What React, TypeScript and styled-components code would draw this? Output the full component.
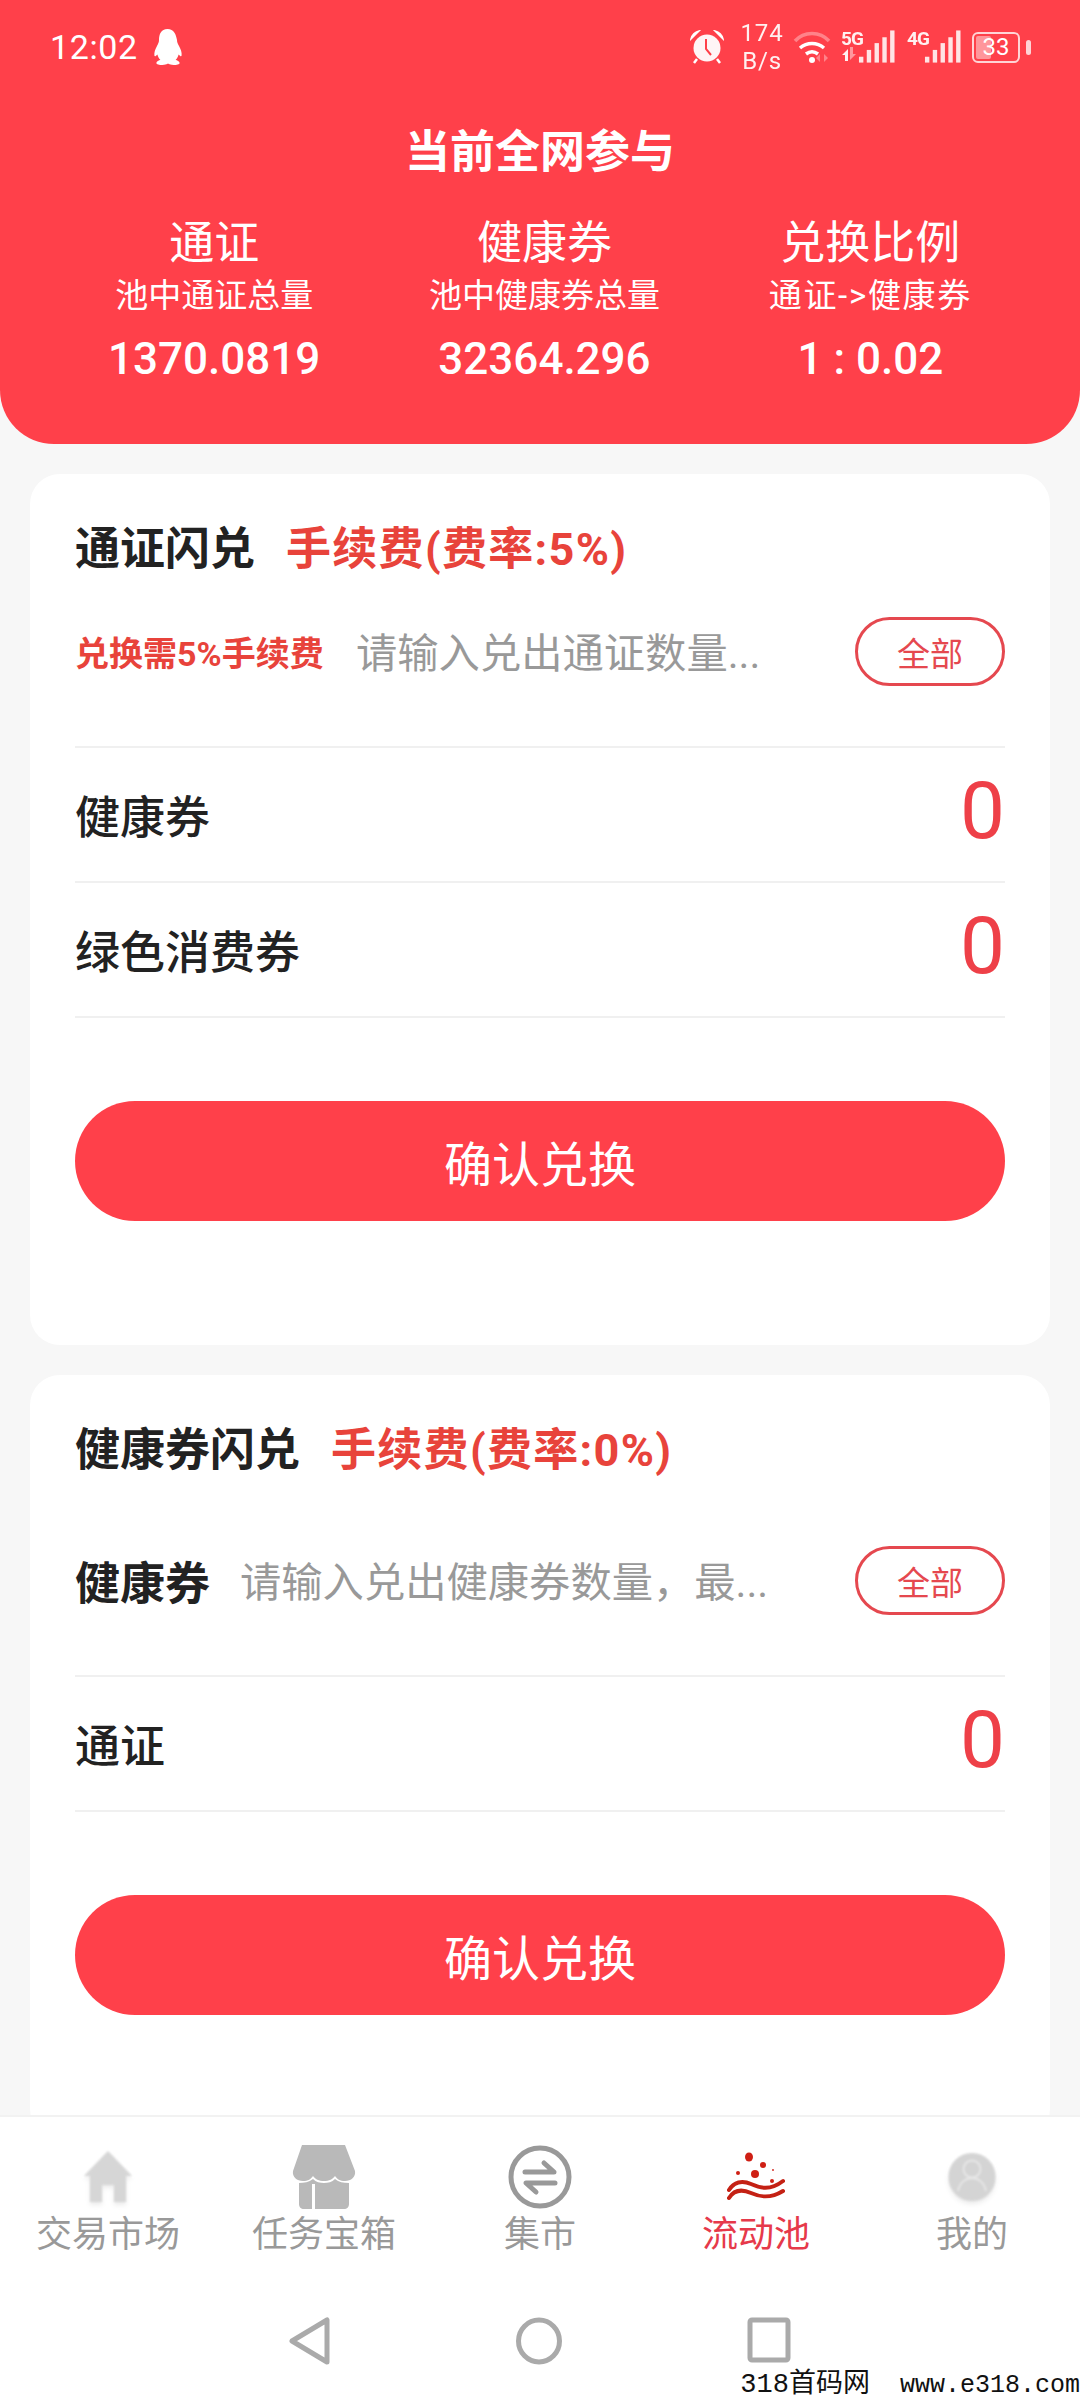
import styled, { createGlobalStyle } from "styled-components";

const RED = "#ff404a";
const FONT = `Roboto, "Noto Sans CJK SC", sans-serif`;

const GlobalStyle = createGlobalStyle`
  html, body {
    margin: 0;
    padding: 0;
    background: #f7f7f7;
  }
  #root {
    height: 2400px;
    overflow: hidden;
    position: relative;
  }
`;

const Page = styled.div`
  width: 1080px;
  font-family: ${FONT};
`;

const Header = styled.header`
  background: ${RED};
  height: 444px;
  border-radius: 0 0 54px 54px;
  color: #fff;
  text-align: center;
  margin-bottom: 30px;
`;

const StatusBar = styled.div`
  height: 94px;
  padding: 0 55px 0 50px;
  box-sizing: border-box;
  display: flex;
  align-items: center;
  color: #fff;
`;

const Clock = styled.span`
  font-size: 34px;
  letter-spacing: 0.6px;
  margin-right: 14px;
`;

const StatusRight = styled.div`
  margin-left: auto;
  display: flex;
  align-items: center;
`;

const Speed = styled.div`
  width: 40px;
  margin: 0 11px 0 18px;
  font-size: 24px;
  line-height: 28px;
  letter-spacing: 0.8px;
  text-align: center;
  white-space: nowrap;
  display: flex;
  flex-direction: column;
  align-items: center;
  opacity: 0.92;
`;

const NetTag = styled.div<{ $left: number }>`
  width: 17px;
  height: 34px;
  margin-left: ${(p) => p.$left}px;
  font-size: 19px;
  line-height: 17px;
  font-weight: 700;
  letter-spacing: -1px;
  white-space: nowrap;
  opacity: 0.92;
  position: relative;
  z-index: 1;
`;

const ArrowMark = styled.svg`
  display: block;
`;

const Battery = styled.div`
  width: 48px;
  height: 31px;
  margin: 0 5px 0 11px;
  box-sizing: border-box;
  border: 2.5px solid #ffd4d6;
  border-radius: 6px;
  padding: 2px;
  position: relative;
  display: flex;
  align-items: center;
  justify-content: center;
  font-size: 24px;
  line-height: 24px;
  color: #fff;
  &::before {
    content: "";
    position: absolute;
    left: 2px;
    top: 2px;
    bottom: 2px;
    width: 33%;
    background: rgba(255, 255, 255, 0.45);
    border-radius: 2px;
  }
  &::after {
    content: "";
    position: absolute;
    right: -13px;
    top: 6px;
    width: 5px;
    height: 15px;
    border-radius: 3px;
    background: #ffd4d6;
  }
`;

const BatteryValue = styled.span`
  position: relative;
`;

const HeadTitle = styled.h1`
  margin: 33px 0 0;
  font-size: 45px;
  line-height: 52px;
  font-weight: 700;
`;

const Stats = styled.div`
  display: flex;
  justify-content: space-between;
  padding: 0 108px;
  margin-top: 39px;
`;

const Stat = styled.div`
  display: flex;
  flex-direction: column;
  align-items: center;
`;

const StatName = styled.div`
  font-size: 45px;
  line-height: 52px;
`;

const StatSub = styled.div<{ $wide?: boolean }>`
  font-size: 33px;
  line-height: 44px;
  margin-top: 4px;
  white-space: nowrap;
  letter-spacing: ${(p) => (p.$wide ? "1.7px" : "0")};
`;

const StatValue = styled.div`
  font-size: 44px;
  line-height: 52px;
  font-weight: 500;
  margin-top: 15px;
  white-space: nowrap;
`;

const Card = styled.section`
  margin: 0 30px 30px;
  padding: 50px 45px 124px;
  background: #fff;
  border-radius: 30px;
`;

const CardTitle = styled.div`
  display: flex;
  align-items: center;
  font-size: 45px;
  line-height: 52px;
  font-weight: 700;
  color: #222;
`;

const Fee = styled.span`
  margin-left: 31px;
  color: #e8433b;
  font-weight: 700;
  letter-spacing: 1.3px;
`;

const InputRow = styled.div<{ $top: number }>`
  margin-top: ${(p) => p.$top}px;
  padding-bottom: 60px;
  display: flex;
  align-items: center;
  border-bottom: 2px solid #f0f0f0;
`;

const Hint = styled.span`
  width: 281px;
  flex: none;
  font-size: 34px;
  font-weight: 700;
  color: #e8433b;
  white-space: nowrap;
`;

const InputLabel = styled.span`
  width: 165px;
  flex: none;
  font-size: 45px;
  font-weight: 700;
  color: #222;
`;

const Placeholder = styled.span`
  flex: 1;
  padding-top: 6px;
  font-size: 41.3px;
  line-height: 63px;
  color: #999;
  white-space: nowrap;
`;

const AllButton = styled.button`
  width: 150px;
  height: 69px;
  flex: none;
  padding: 0;
  background: #fff;
  border: 3px solid #e5484f;
  border-radius: 35px;
  font-family: inherit;
  font-size: 33px;
  color: #e5484f;
`;

const ResultRow = styled.div`
  height: 133px;
  display: flex;
  align-items: center;
  justify-content: space-between;
  border-bottom: 2px solid #f0f0f0;
`;

const ResultLabel = styled.span`
  font-size: 45px;
  font-weight: 500;
  color: #222;
`;

const ResultValue = styled.span`
  font-size: 80px;
  line-height: 80px;
  margin-top: -7px;
  color: #ee4048;
`;

const Submit = styled.button`
  display: block;
  width: 100%;
  height: 120px;
  margin-top: 83px;
  background: ${RED};
  border: 0;
  border-radius: 60px;
  font-family: inherit;
  font-size: 48px;
  color: #fff;
`;

const BottomArea = styled.div`
  position: absolute;
  left: 0;
  right: 0;
  bottom: 0;
  height: 285px;
  background: #fff;
  border-top: 2px solid #f2f2f2;
  box-sizing: border-box;
  font-family: ${FONT};
`;

const TabBar = styled.nav`
  height: 150px;
  display: flex;
`;

const Tab = styled.div<{ $active?: boolean }>`
  flex: 1;
  display: flex;
  flex-direction: column;
  align-items: center;
  font-size: 36px;
  color: ${(p) => (p.$active ? "#e6394a" : "#999")};
`;

const TabIcon = styled.div`
  height: 70px;
  margin-top: 25px;
  display: flex;
  align-items: center;
  justify-content: center;
`;

const TabLabel = styled.span`
  line-height: 40px;
  margin-top: 3px;
`;

const SoftIcon = styled.svg`
  filter: blur(1px) drop-shadow(0 3px 2px rgba(0, 0, 0, 0.08));
`;

const SystemNav = styled.div`
  height: 130px;
  padding-top: 50px;
  box-sizing: border-box;
  display: flex;
  justify-content: center;
  gap: 185px;
`;

const Watermark = styled.div`
  position: absolute;
  right: 0;
  bottom: -1px;
  font-family: "Liberation Mono", "Noto Sans CJK SC", monospace;
  font-size: 25px;
  line-height: 30px;
  color: #111;
  white-space: pre;
`;

const WatermarkName = styled.span`
  font-size: 27px;
`;

const Penguin = () => (
  <svg width="31" height="36" viewBox="0 0 31 36" fill="#fff">
    <path d="M15.5 0C9 0 7 5.5 7 11c0 2-.6 3.5-2 6-1.8 3.2-3 6.6-2.6 9.4.2 1.4 1.2 1 3-1 .6 2.400 1.800 4.200 3 5.400-2.400.8-4 1.800-4 3.200 0 1.400 3 2 6 2 2.400 0 4-.6 5-1.200h1.200c1 .6 2.600 1.200 5 1.200 3 0 6-.6 6-2 0-1.400-1.600-2.400-4-3.200 1.200-1.200 2.400-3 3-5.400 1.800 2 2.800 2.400 3 1 .4-2.800-.8-6.200-2.600-9.400-1.400-2.500-2-4-2-6C24 5.500 22 0 15.500 0z" />
  </svg>
);

const AlarmIcon = () => (
  <svg width="34" height="34" viewBox="0 0 34 34">
    <circle cx="17" cy="18" r="13.500" fill="#fff" opacity="0.95" />
    <path d="M1 9c1-4 4-7 8-8zM33 9c-1-4-4-7-8-8z" fill="#fff" stroke="#fff" strokeWidth="1.500" />
    <path d="M7 29l-3 4M27 29l3 4" stroke="#fff" strokeWidth="2.500" />
    <path d="M16 9v10l5 6" stroke={RED} strokeWidth="2" fill="none" />
  </svg>
);

const WifiIcon = () => (
  <svg width="40" height="34" viewBox="0 0 40 34" fill="none" stroke="#fff" strokeWidth="3.500">
    <path d="M2 11C11 1 27 1 36 11" opacity="0.35" />
    <path d="M7 18c7-6 17-6 24 0" />
    <path d="M13 24c4-3 8-3 12 0" />
    <circle cx="19" cy="30" r="3" fill="#fff" stroke="none" />
    <path d="M27 32v-8l-4 4zM31 24v8l4-4z" fill="#fff" stroke="none" opacity="0.35" />
  </svg>
);

const NetArrows = () => (
  <ArrowMark width="16" height="14" viewBox="0 0 16 14" fill="#fff">
    <path d="M7 14V2L1 8H4V14z" />
    <path d="M9 0V13L15 7H12V0z" opacity="0.5" />
  </ArrowMark>
);

const Signal = () => (
  <svg width="37" height="34" viewBox="0 0 38 34" fill="#ffe4e5">
    <rect x="1" y="27" width="4.500" height="6" />
    <rect x="9" y="20" width="4.500" height="13" />
    <rect x="17" y="13" width="4.500" height="20" />
    <rect x="25" y="7" width="4.500" height="26" />
    <rect x="33" y="0" width="4.500" height="33" />
  </svg>
);

const HomeIcon = () => (
  <SoftIcon width="50" height="54" viewBox="0 0 50 54" fill="#d6d6d6">
    <path d="M25 1L49 26H43V52H31V35H19V52H7V26H1z" />
  </SoftIcon>
);

const StoreIcon = () => (
  <svg width="64" height="64" viewBox="0 0 64 64">
    <path d="M10 0H53L63 26c1 6-4 10-10 10-5 0-8-2-10-5-2 3-6 5-11 5s-9-2-11-5c-2 3-5 5-10 5C5 36 0 32 1 26z" fill="#b9b9b9" />
    <path d="M7 38c5 0 10-1 14-4 3 3 7 4 11 4s8-1 11-4c4 3 8 4 14 4v21c0 3-2 5-5 5H12c-3 0-5-2-5-5z" fill="#b9b9b9" />
    <rect x="20" y="39" width="3" height="25" fill="#fff" />
  </svg>
);

const SwapIcon = () => (
  <svg width="64" height="64" viewBox="0 0 64 64" fill="none" stroke="#999">
    <circle cx="32" cy="32" r="29" strokeWidth="5" />
    <path d="M17 27h29l-10-9" strokeWidth="5" strokeLinecap="round" strokeLinejoin="round" />
    <path d="M47 38H18l10 9" strokeWidth="5" strokeLinecap="round" strokeLinejoin="round" />
  </svg>
);

const PoolIcon = () => (
  <svg width="58" height="50" viewBox="0 0 58 50" fill="#cf1f14">
    <ellipse cx="22" cy="5" rx="4" ry="4.500" />
    <circle cx="36" cy="13" r="3" />
    <circle cx="11" cy="21" r="2" />
    <circle cx="28" cy="22" r="4" />
    <circle cx="46" cy="18" r="0.900" />
    <circle cx="45" cy="29" r="2" />
    <path d="M2 38C7 30 15 28 24 32s19 7 32-3" fill="none" stroke="#c42114" strokeWidth="4" strokeLinecap="round" />
    <path d="M2 46C7 38 15 37 24 41s19 6 32-2" fill="none" stroke="#c42114" strokeWidth="4" strokeLinecap="round" />
  </svg>
);

const MineIcon = () => (
  <SoftIcon width="48" height="50" viewBox="0 0 48 50">
    <ellipse cx="24" cy="25" rx="23.500" ry="24" fill="#d4d4d4" />
    <circle cx="24" cy="17" r="8.500" fill="none" stroke="#e8e8e8" strokeWidth="1.800" />
    <path d="M10 39c2-9 8-13 14-13s12 4 14 13" fill="none" stroke="#e8e8e8" strokeWidth="1.800" />
  </SoftIcon>
);

const BackIcon = () => (
  <svg width="42" height="48" viewBox="0 0 42 48" fill="none" stroke="#aaa" strokeWidth="5" strokeLinejoin="round">
    <path d="M38 3V45L3 24z" />
  </svg>
);

const HomeNavIcon = () => (
  <svg width="46" height="48" viewBox="0 0 46 48" fill="none" stroke="#aaa" strokeWidth="5">
    <ellipse cx="23" cy="24" rx="20.500" ry="21" />
  </svg>
);

const RecentIcon = () => (
  <svg width="44" height="46" viewBox="0 0 44 46" fill="none" stroke="#aaa" strokeWidth="5" strokeLinejoin="round">
    <rect x="3" y="3" width="38" height="40" rx="2" />
  </svg>
);

const tabs = [
  { label: "交易市场", icon: <HomeIcon /> },
  { label: "任务宝箱", icon: <StoreIcon /> },
  { label: "集市", icon: <SwapIcon /> },
  { label: "流动池", icon: <PoolIcon />, active: true },
  { label: "我的", icon: <MineIcon /> },
];

const stats = [
  { name: "通证", sub: "池中通证总量", value: "1370.0819" },
  { name: "健康券", sub: "池中健康券总量", value: "32364.296" },
  { name: "兑换比例", sub: "通证->健康券", value: "1 : 0.02", wide: true },
];

const Result = ({ label }: { label: string }) => (
  <ResultRow>
    <ResultLabel>{label}</ResultLabel>
    <ResultValue>0</ResultValue>
  </ResultRow>
);

const App = () => {
  return (
    <>
      <GlobalStyle />
      <Page>
        <Header>
          <StatusBar>
            <Clock>12:02</Clock>
            <Penguin />
            <StatusRight>
              <AlarmIcon />
              <Speed>
                <span>174</span>
                <span>B/s</span>
              </Speed>
              <WifiIcon />
              <NetTag $left={8}>
                5G
                <NetArrows />
              </NetTag>
              <Signal />
              <NetTag $left={12}>4G</NetTag>
              <Signal />
              <Battery>
                <BatteryValue>33</BatteryValue>
              </Battery>
            </StatusRight>
          </StatusBar>
          <HeadTitle>当前全网参与</HeadTitle>
          <Stats>
            {stats.map((s) => (
              <Stat key={s.name}>
                <StatName>{s.name}</StatName>
                <StatSub $wide={s.wide}>{s.sub}</StatSub>
                <StatValue>{s.value}</StatValue>
              </Stat>
            ))}
          </Stats>
        </Header>

        <Card>
          <CardTitle>
            通证闪兑
            <Fee>手续费(费率:5%)</Fee>
          </CardTitle>
          <InputRow $top={41}>
            <Hint>兑换需5%手续费</Hint>
            <Placeholder>请输入兑出通证数量...</Placeholder>
            <AllButton>全部</AllButton>
          </InputRow>
          <Result label="健康券" />
          <Result label="绿色消费券" />
          <Submit>确认兑换</Submit>
        </Card>

        <Card>
          <CardTitle>
            健康券闪兑
            <Fee>手续费(费率:0%)</Fee>
          </CardTitle>
          <InputRow $top={69}>
            <InputLabel>健康券</InputLabel>
            <Placeholder>请输入兑出健康券数量，最...</Placeholder>
            <AllButton>全部</AllButton>
          </InputRow>
          <Result label="通证" />
          <Submit>确认兑换</Submit>
        </Card>
      </Page>

      <BottomArea>
        <TabBar>
          {tabs.map((t) => (
            <Tab key={t.label} $active={t.active}>
              <TabIcon>{t.icon}</TabIcon>
              <TabLabel>{t.label}</TabLabel>
            </Tab>
          ))}
        </TabBar>
        <SystemNav>
          <BackIcon />
          <HomeNavIcon />
          <RecentIcon />
        </SystemNav>
        <Watermark>
          <WatermarkName>318首码网</WatermarkName>  www.e318.com
        </Watermark>
      </BottomArea>
    </>
  );
};

export default App;
